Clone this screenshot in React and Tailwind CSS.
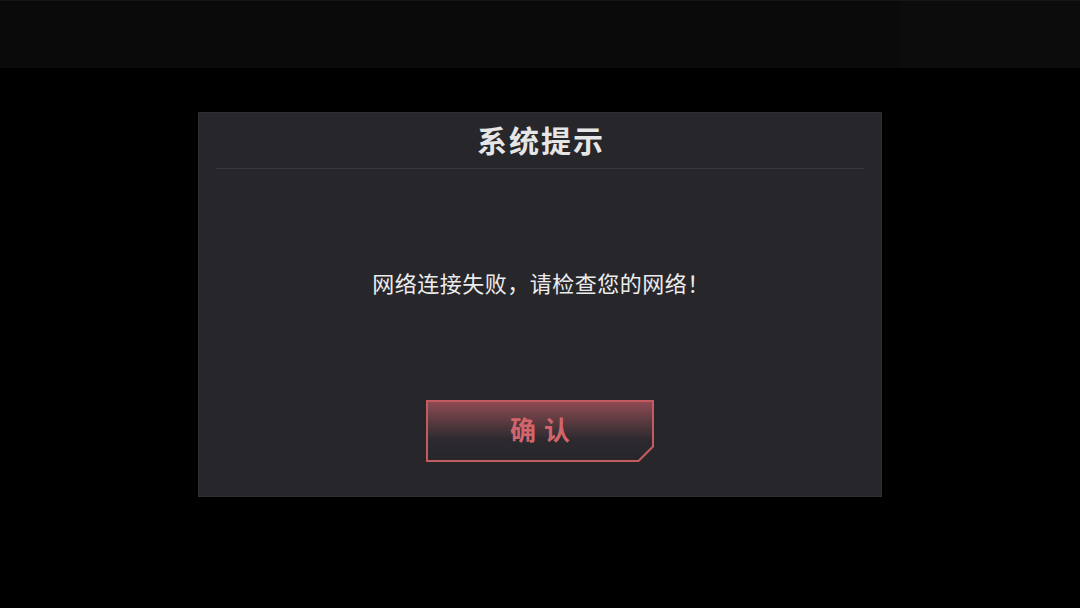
import React from "react";

export default function App() {
  const cjk = { fontFamily: '"Noto Sans CJK SC", "Noto Sans", sans-serif' };
  return (
    <div className="w-[1080px] h-[608px] bg-black flex flex-col overflow-hidden" style={cjk}>
      <div className="h-[68px] flex border-t border-[#161616]">
        <div className="flex-1 bg-[#0a0a0a]" />
        <div className="w-[180px] bg-[#0c0c0c]" />
      </div>
      <div className="mt-[44px] ml-[198px] w-[684px] h-[385px] bg-[#27262b] border border-[#2f2e33] flex flex-col">
        <div className="h-[55px] flex items-center justify-center pb-[3px]">
          <span className="text-[30px] font-bold text-[#e6e6e6] tracking-[2px] pl-[2px] leading-none">系统提示</span>
        </div>
        <div className="mx-[17px] h-px bg-[#38373c]" />
        <div className="flex-1 flex items-center justify-center pb-[6px]">
          <span className="text-[22px] text-[#ececec] leading-none tracking-[0.5px] pl-[2px]">网络连接失败，请检查您的网络！</span>
        </div>
        <div className="flex justify-center pb-[34px]">
          <div className="w-[228px] h-[62px] bg-[#c25a60] p-[2px] [clip-path:polygon(0_0,100%_0,100%_calc(100%-15px),calc(100%-15px)_100%,0_100%)]">
            <div className="w-full h-full bg-linear-to-b from-[#8e4a52] via-[#2c2a2f] via-65% to-[#27262b] flex items-center justify-center pb-[4px] [clip-path:polygon(0_0,100%_0,100%_calc(100%-14px),calc(100%-14px)_100%,0_100%)]">
              <span className="text-[26px] font-bold text-[#d2656b] leading-none tracking-[8px] pl-[8px]">确认</span>
            </div>
          </div>
        </div>
      </div>
    </div>
  );
}
